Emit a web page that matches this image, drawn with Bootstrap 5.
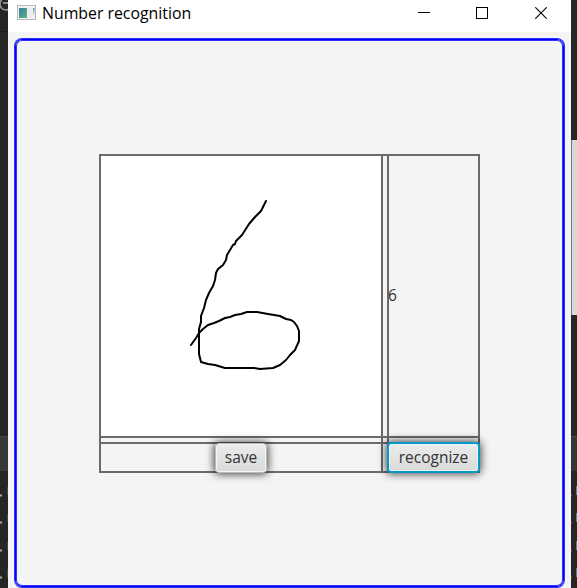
<!DOCTYPE html>
<html lang="en">
<head>
<meta charset="utf-8">
<meta name="viewport" content="width=device-width, initial-scale=1">
<title>Number recognition</title>
<link href="https://cdn.jsdelivr.net/npm/bootstrap@5.3.0/dist/css/bootstrap.min.css" rel="stylesheet">
<style>
body{font-family:"Open Sans","Noto Sans",sans-serif;background:#262626;height:588px;color:#333}
.desk-left{width:8px;background:#262626}
.desk-right{width:6px;background:#262624}
.desk-left svg,.desk-right svg{display:block}
.app-window{background:#f4f4f4}
.titlebar{height:32px;background:#fff;color:#000;padding-left:9px}
.title-text{font-size:15.85px;line-height:22px;margin-left:6px;margin-top:2px}
.caption-btns{margin-top:7px;margin-right:24px;gap:47px}
.caption-btns svg,.app-icon{display:block}
.caption-btns svg:first-child{margin-right:-1px}
.app-icon{margin-top:5px}
.pane{margin:7px 7px 0;height:548px;border:1px solid #00f;border-radius:7px;padding:114px 0 0 83px;box-shadow:0 0 0 1px rgba(0,0,255,.8),inset 0 0 0 1px rgba(0,0,255,.8)}
.board{width:381px;height:319px;border:2px solid #6b6b6b;grid-template-columns:280px 8px 89px;grid-template-rows:280px 8px 27px}
.gutter-v{grid-column:2;grid-row:1/4;border:solid #6b6b6b;border-width:0 2px}
.gutter-h{grid-row:2;grid-column:1/4;border:solid #6b6b6b;border-width:2px 0}
.canvas-cell{grid-column:1;grid-row:1}
.result-cell{grid-column:3;grid-row:1;font-size:15.5px;padding-bottom:1px}
.result-cell span{margin-left:-1px}
.save-cell{grid-column:1;grid-row:3}
.recognize-cell{grid-column:3;grid-row:3}
.fx-btn{font-size:15.5px;line-height:1;padding:0;color:#333;border:1px solid #bababa;border-radius:4px;background:linear-gradient(#ececec,#d9d9d9);z-index:1;flex:none}
.fx-save{width:52px;height:30px;margin-top:1px;box-shadow:inset 0 0 0 1px #f5f5f5,0 0 8px 1px rgba(0,0,0,.75)}
.fx-rec{width:93px;height:31px;border:2px solid #0798c4;box-shadow:inset 0 0 0 1px #e9f5fa,0 0 8px 1px rgba(0,0,0,.7)}
</style>
<script src="https://cdn.jsdelivr.net/npm/bootstrap@5.3.0/dist/js/bootstrap.bundle.min.js"></script>
</head>
<body class="m-0 overflow-hidden">
<div class="d-flex h-100">
  <div class="desk-left flex-shrink-0">
    <svg width="8" height="588">
      <circle cx="6" cy="4" r="6" fill="none" stroke="#999" stroke-width="1.5"/><path d="M3 3h5" stroke="#aaa" stroke-width="1.5"/>
      <path d="M0 31.5h8" stroke="#1d1d1d"/>
      <rect y="436" width="8" height="35" fill="#36383a"/><path d="M0 436.500h8" stroke="#484848"/>
      <path d="M0 495.500h2M0 522.500h2M0 550.500h2M0 577.500h2" stroke="#b5aaa0" stroke-width="2"/>
      <path d="M7.500 487v8M7.500 514v8M7.500 542v8M7.500 569v8" stroke="#3c4660"/>
    </svg>
  </div>
  <main class="app-window flex-grow-1">
    <header class="titlebar d-flex align-items-start">
      <svg class="app-icon" width="19" height="16">
        <defs><linearGradient id="teal" x1="0" y1="0" x2="1" y2="1"><stop offset="0" stop-color="#3b7f9c"/><stop offset="1" stop-color="#5bb486"/></linearGradient><linearGradient id="tealFade" x1="0" y1="0" x2="0" y2="1"><stop offset="0" stop-color="#4f9a92"/><stop offset="1" stop-color="#d5e8e0"/></linearGradient></defs>
        <rect x=".5" y=".5" width="18" height="14" fill="#f3f3f3" stroke="#b5b8bd"/>
        <rect x="2" y="3" width="8" height="10" fill="url(#teal)"/>
        <rect x="11" y="3" width="4" height="10" fill="#ebedee"/>
        <rect x="16" y="3" width="1.500" height="7" fill="url(#tealFade)"/>
      </svg>
      <span class="title-text">Number recognition</span>
      <div class="caption-btns d-flex ms-auto">
        <svg width="12" height="12"><path d="M0 5.500h12" stroke="#000"/></svg>
        <svg width="12" height="12"><rect x=".5" y=".5" width="11" height="11" fill="none" stroke="#000"/></svg>
        <svg width="12" height="12"><path d="M.3.3l11.400 11.400M11.700.3L.3 11.700" stroke="#000" stroke-width="1.100"/></svg>
      </div>
    </header>
    <section class="pane">
      <div class="board d-grid">
        <div class="gutter-h"></div>
        <div class="gutter-v"></div>
        <div class="canvas-cell bg-white">
          <svg class="d-block" width="280" height="280" viewBox="101 156 280 280" fill="none" stroke="#000" stroke-width="2" stroke-linecap="round" stroke-linejoin="round">
            <path d="M266 201L261 211L255 217L249 224L242 235L236 241L235 244L233 245L227 255L226 260L223 265L218 269L216 273L215 280L213 286L209 293L206 300L204 308L201 316L201 322L199 329L199 354L201 362L208 364L215 365L225 368H254L260 369L273 368L280 365L286 360L290 355L295 350L299 341V331L297 326L294 322L291 320L286 319L280 316L274 315L268 314L257 312H247L241 314L235 315L230 317L225 318L219 321L214 323L208 325L203 329L199 333L196 338L191 345"/>
          </svg>
        </div>
        <div class="result-cell d-flex align-items-center"><span>6</span></div>
        <div class="save-cell d-flex align-items-center justify-content-center"><button type="button" class="btn fx-btn fx-save">save</button></div>
        <div class="recognize-cell d-flex align-items-center justify-content-center"><button type="button" class="btn fx-btn fx-rec">recognize</button></div>
      </div>
    </section>
  </main>
  <div class="desk-right flex-shrink-0">
    <svg width="6" height="588">
      <rect y="140" width="6" height="175" fill="#d8d8d8"/><path d="M.5 140v175" stroke="#777"/>
      <rect y="436" width="6" height="35" fill="#363838"/><path d="M0 436.500h6" stroke="#484848"/>
      <path d="M5.500 486v9M5.500 513v9M5.500 541v9M5.500 568v9" stroke="#4d83ae"/>
      <path d="M0 495.500h1M0 522.500h1M0 550.500h1M0 577.500h1" stroke="#8a4a3c" stroke-width="2"/>
    </svg>
  </div>
</div>
</body>
</html>
